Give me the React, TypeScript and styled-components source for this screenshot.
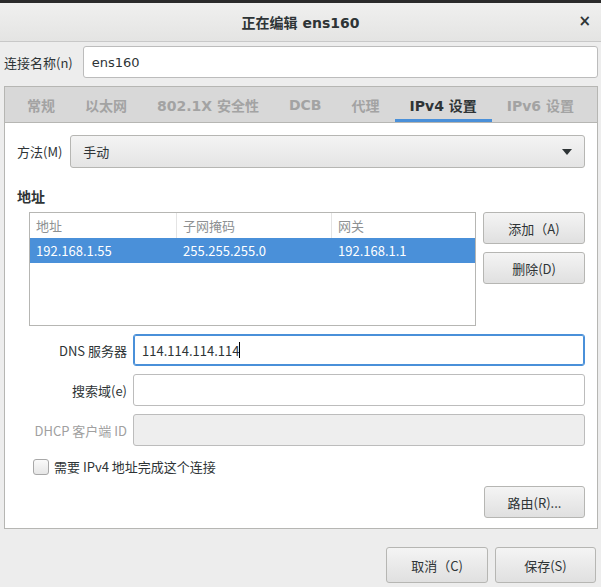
import React from "react";
import styled, { createGlobalStyle } from "styled-components";

const G = createGlobalStyle`
  html,body{margin:0;padding:0;background:#ededed;}
  body{font-family:"Noto Sans CJK SC","DejaVu Sans",sans-serif;font-size:13px;color:#2e3436;width:601px;height:587px;overflow:hidden;}
  *{box-sizing:border-box;}
`;
const TopStrip = styled.div`height:3px;background:#2b2b2b;`;
const TitleBar = styled.div`height:39px;display:flex;align-items:center;justify-content:center;position:relative;
  background:linear-gradient(#f0f0ef,#e4e4e3);border-bottom:1px solid #c8c8c8;font-weight:bold;font-size:14px;font-family:"DejaVu Sans","Noto Sans CJK SC",sans-serif;`;
const Close = styled.span`position:absolute;right:10px;top:9px;font-size:15px;font-weight:bold;`;
const Body = styled.div`padding:4px 3px 0 4px;`;
const Row = styled.div<{gap?:number}>`display:flex;align-items:center;gap:${p=>p.gap??8}px;`;
const Input = styled.div<{focus?:boolean;disabled?:boolean;cjk?:boolean}>`flex:1;height:32px;display:flex;align-items:center;padding:0 8px;
  border:1px solid ${p=>p.focus?"#4a90d9":"#bcbcbc"};border-radius:3px;background:${p=>p.disabled?"#eeeeee":"#fff"};
  box-shadow:${p=>p.focus?"inset 0 0 0 1px #4a90d9":"none"};
  font-family:${p=>p.cjk?'"Noto Sans CJK SC",sans-serif':'"DejaVu Sans","Noto Sans CJK SC",sans-serif'};font-size:13px;`;
const Caret = styled.span`display:inline-block;width:1px;height:16px;background:#000;`;
const Notebook = styled.div`margin-top:8px;border:1px solid #b6b6b3;height:443px;display:flex;flex-direction:column;`;
const Tabs = styled.div`height:36px;background:#d8d8d8;display:flex;align-items:stretch;padding-left:7px;border-bottom:1px solid #b6b6b3;`;
const Tab = styled.div<{active?:boolean}>`padding:3px 15px 0;display:flex;align-items:center;font-weight:bold;font-size:14px;
  color:${p=>p.active?"#2e3436":"#a3a3a3"};border-bottom:${p=>p.active?"3px solid #4a90d9":"3px solid transparent"};
  font-family:"DejaVu Sans","Noto Sans CJK SC",sans-serif;`;
const Page = styled.div`flex:1;background:#fff;padding:12px 12px 0 12px;display:flex;flex-direction:column;`;
const Label = styled.span`font-size:13px;white-space:nowrap;`;
const Combo = styled.div`flex:1;height:33px;border:1px solid #b6b6b3;border-radius:3px;background:linear-gradient(#f4f4f4,#e4e4e4);
  display:flex;align-items:center;justify-content:space-between;padding:0 12px 0 12px;`;
const Section = styled.div`font-weight:bold;font-size:14px;margin:18px 0 6px 0;`;
const TableWrap = styled.div`display:flex;gap:7px;padding-left:12px;`;
const Table = styled.div`width:448px;height:114px;border:1px solid #b6b6b3;background:#fff;`;
const TRow = styled.div<{sel?:boolean;head?:boolean}>`display:grid;grid-template-columns:147px 155px 1fr;height:25px;align-items:center;
  background:${p=>p.sel?"#4a90d9":"#fff"};color:${p=>p.sel?"#fff":p.head?"#8e9192":"#2e3436"};`;
const Cell = styled.div<{head?:boolean;last?:boolean}>`padding-left:6px;height:100%;display:flex;align-items:center;
  border-right:${p=>p.head&&!p.last?"1px solid #e4e4e4":"none"};`;
const Btn = styled.div<{w?:number;h?:number}>`width:${p=>p.w??102}px;height:${p=>p.h??32}px;border:1px solid #b6b6b3;border-radius:3px;
  background:linear-gradient(#f4f4f4,#e0e0e0);display:flex;align-items:center;justify-content:center;font-size:13px;`;
const BtnCol = styled.div`display:flex;flex-direction:column;gap:8px;`;
const FormRow = styled.div<{dim?:boolean}>`display:flex;align-items:center;gap:6px;margin-top:8px;color:${p=>p.dim?"#a0a0a0":"inherit"};`;
const FLabel = styled.div`width:110px;text-align:right;white-space:nowrap;`;
const Check = styled.div`display:flex;align-items:center;gap:5px;margin:11px 0 0 16px;`;
const Box = styled.span`width:16px;height:16px;border:1px solid #a8a8a8;border-radius:3px;background:linear-gradient(#fafafa,#e6e6e6);`;
const Right = styled.div`display:flex;justify-content:flex-end;margin-top:10px;`;
const Footer = styled.div`display:flex;justify-content:flex-end;gap:7px;padding:18px 2px 0 0;`;

export default function App(){
  return <>
    <G/>
    <TopStrip/>
    <TitleBar>正在编辑 ens160<Close>×</Close></TitleBar>
    <Body>
      <Row gap={10}>
        <Label>连接名称(n)</Label>
        <Input>ens160</Input>
      </Row>
      <Notebook>
        <Tabs>
          {["常规","以太网","802.1X 安全性","DCB","代理"].map(t=><Tab key={t}>{t}</Tab>)}
          <Tab active>IPv4 设置</Tab>
          <Tab>IPv6 设置</Tab>
        </Tabs>
        <Page>
          <Row gap={8}>
            <Label>方法(M)</Label>
            <Combo>手动<svg width="10" height="6" viewBox="0 0 10 6"><path d="M0 0h10L5 6z" fill="#2e3436"/></svg></Combo>
          </Row>
          <Section>地址</Section>
          <TableWrap>
            <Table>
              <TRow head><Cell head>地址</Cell><Cell head>子网掩码</Cell><Cell head last>网关</Cell></TRow>
              <TRow sel><Cell>192.168.1.55</Cell><Cell>255.255.255.0</Cell><Cell>192.168.1.1</Cell></TRow>
            </Table>
            <BtnCol>
              <Btn>添加（A)</Btn>
              <Btn>删除(D)</Btn>
            </BtnCol>
          </TableWrap>
          <FormRow><FLabel>DNS 服务器</FLabel><Input focus cjk>114.114.114.114<Caret/></Input></FormRow>
          <FormRow><FLabel>搜索域(e)</FLabel><Input/></FormRow>
          <FormRow dim><FLabel>DHCP 客户端 ID</FLabel><Input disabled/></FormRow>
          <Check><Box/>需要 IPv4 地址完成这个连接</Check>
          <Right><Btn w={101}>路由(R)...</Btn></Right>
        </Page>
      </Notebook>
      <Footer>
        <Btn w={102} h={36}>取消（C)</Btn>
        <Btn w={101} h={36}>保存(S)</Btn>
      </Footer>
    </Body>
  </>;
}
